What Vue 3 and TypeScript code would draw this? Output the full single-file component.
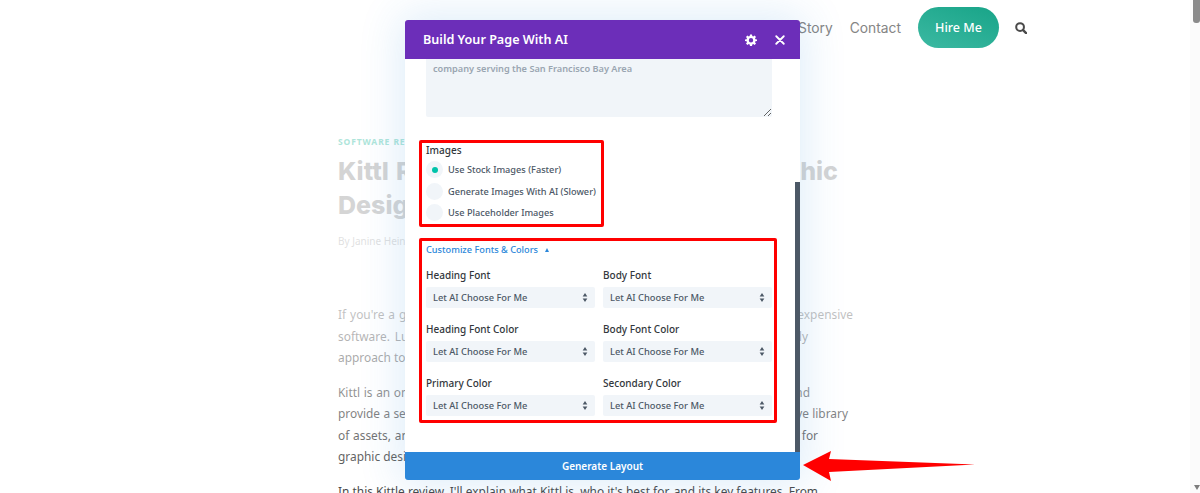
<template>
  <div class="page">
    <header class="site-head">
      <a class="nav-link">Home</a>
      <a class="nav-link">Our Story</a>
      <a class="nav-link">Contact</a>
      <a class="hire">Hire Me</a>
      <svg class="search" viewBox="0 0 13 13" width="12" height="12">
        <circle cx="5.5" cy="5.500" r="4.200" fill="none" stroke="#4a4a4a" stroke-width="2.200" />
        <path d="M8.800 8.800 L12 12" stroke="#4a4a4a" stroke-width="2.600" stroke-linecap="round" />
      </svg>
    </header>

    <article class="post">
      <div class="post-fade"></div>
      <p class="cat">SOFTWARE REVIEWS</p>
      <h1 v-for="line in titleLines" :key="line.text" class="title" :style="{ width: line.width + 'px' }">{{ line.text }}</h1>
      <p class="byline">By Janine Heinrichs</p>
      <div v-for="(para, i) in paragraphs" :key="i" class="para">
        <span v-for="line in para" :key="line.text" class="line" :style="{ width: line.width + 'px' }">{{ line.text }}</span>
      </div>
    </article>

    <div class="scroll-track">
      <div class="scroll-thumb"></div>
      <div class="scroll-down"></div>
    </div>

    <section class="modal">
      <div class="modal-head">
        <span class="modal-title">Build Your Page With AI</span>
        <svg class="gear" viewBox="0 0 24 24" width="12" height="12">
          <path fill="#fff" fill-rule="evenodd" d="M10 1h4l.6 3.2 1.9.8L19.2 3 22 5.800l-2 2.700.8 1.900L24 11v3l-3.200.6-.8 1.900 2 2.700L19.200 22l-2.700-2-1.900.8L14 24h-4l-.6-3.200-1.900-.8-2.700 2L2 19.200l2-2.700-.8-1.900L0 14v-3l3.200-.6.8-1.900-2-2.700L4.800 3l2.700 2 1.900-.8zM12 8a4.400 4.400 0 1 0 0 8.800A4.400 4.400 0 0 0 12 8z" />
        </svg>
        <svg class="close" viewBox="0 0 12 12" width="10" height="10">
          <path d="M1.500 1.500 L10.500 10.500 M10.500 1.500 L1.500 10.500" stroke="#fff" stroke-width="2.200" stroke-linecap="round" />
        </svg>
      </div>

      <div class="modal-body">
        <textarea class="brief" placeholder="Example: a residential plumbing repair and installation family owned&#10;company serving the San Francisco Bay Area"></textarea>

        <div class="red-box images-box">
          <div class="field-label">Images</div>
          <label v-for="(opt, i) in imageOptions" :key="opt" class="radio-row">
            <span class="radio"><span v-if="i === 0" class="radio-dot"></span></span>
            {{ opt }}
          </label>
        </div>

        <div class="red-box fonts-box">
          <div class="customize">Customize Fonts &amp; Colors <span class="tri"></span></div>
          <div class="select-grid">
            <div v-for="name in selectFields" :key="name" class="select-field">
              <div class="field-label">{{ name }}</div>
              <div class="select-wrap">
                <select class="select">
                  <option>Let AI Choose For Me</option>
                </select>
                <svg class="updown" viewBox="0 0 6 10" width="6" height="9">
                  <path d="M3 0 L5.600 3.800 H0.400 Z M3 10 L5.600 6.200 H0.400 Z" fill="#4c5866" />
                </svg>
              </div>
            </div>
          </div>
        </div>
      </div>

      <div class="modal-scroll"></div>
      <button class="generate">Generate Layout</button>
    </section>

    <svg class="red-arrow" viewBox="0 0 180 32" width="180" height="32">
      <path d="M2 15 L30 1 L28 9 L174 14.500 L28 22 L30 31 Z" fill="#f00" />
    </svg>
  </div>
</template>

<script setup lang="ts">
interface Line {
  text: string
  width: number
}

const titleLines: Line[] = [
  { text: 'Kittl Review: The Best AI-Based Graphic', width: 500 },
  { text: 'Design Tool?', width: 180 },
]

// line widths are set so the line ends land where they do in the article column
const paragraphs: Line[][] = [
  [
    { text: "If you're a graphic designer or business owner, you know how hard it is to avoid expensive", width: 515 },
    { text: 'software. Luckily, new online tools are changing that by taking a simpler, friendly', width: 470 },
    { text: 'approach to graphic design for everyone.', width: 200 },
  ],
  [
    { text: 'Kittl is an online graphic design platform that helps you create stunning visuals and', width: 472 },
    { text: 'provide a seamless design experience with AI tools, fun templates, and an extensive library', width: 510 },
    { text: 'of assets, and it is a great all-in-one solution, whether new or a true professional, for', width: 480 },
    { text: 'graphic design projects of any kind.', width: 180 },
  ],
  [
    { text: "In this Kittle review, I'll explain what Kittl is, who it's best for, and its key features. From", width: 480 },
  ],
]

const imageOptions = ['Use Stock Images (Faster)', 'Generate Images With AI (Slower)', 'Use Placeholder Images']

const selectFields = ['Heading Font', 'Body Font', 'Heading Font Color', 'Body Font Color', 'Primary Color', 'Secondary Color']
</script>

<style>
html, body {
  margin: 0;
  height: 493px;
  overflow: hidden;
  background: #fff;
}
</style>

<style scoped>
.page {
  position: relative;
  width: 1200px;
  height: 493px;
  overflow: hidden;
  font-family: "Noto Sans", "Open Sans", sans-serif;
}

.site-head {
  display: flex;
  justify-content: flex-end;
  align-items: center;
  height: 55px;
  padding-right: 173px;
  box-sizing: border-box;
}
.nav-link {
  font-family: Inter, sans-serif;
  font-size: 13.800px;
  color: #858585;
  margin-right: 17px;
}
.hire {
  width: 81px;
  height: 41px;
  line-height: 41px;
  text-align: center;
  border-radius: 21px;
  background: linear-gradient(200deg, #18a488, #3cb9a2);
  color: #fff;
  font-size: 12.500px;
  font-weight: 500;
}
.search {
  margin-left: 16px;
}

.post {
  position: relative;
  padding: 81px 0 0 338px;
}
.post-fade {
  position: absolute;
  left: 0;
  right: 0;
  top: 0;
  height: 438px;
  background: linear-gradient(to bottom, rgba(255, 255, 255, 0.78) 0%, rgba(255, 255, 255, 0.8) 50%, rgba(255, 255, 255, 0.55) 72%, rgba(255, 255, 255, 0.1) 100%);
  z-index: 1;
}
.cat {
  position: relative;
  z-index: 2;
  margin: 0 0 6px;
  font-size: 8.500px;
  line-height: 12px;
  font-weight: 700;
  letter-spacing: 0.900px;
  color: #aee5da;
}
.title {
  margin: 0;
  font-family: Inter, sans-serif;
  font-size: 25px;
  line-height: 34px;
  font-weight: 800;
  color: #333;
  white-space: nowrap;
  text-align: justify;
  text-align-last: justify;
}
.byline {
  margin: 12px 0 56px;
  font-size: 10px;
  line-height: 14px;
  color: #666;
}
.para {
  margin-bottom: 13px;
}
.line {
  display: block;
  font-size: 11.900px;
  line-height: 21.500px;
  color: #333;
  white-space: nowrap;
  text-align: justify;
  text-align-last: justify;
}

.scroll-track {
  position: absolute;
  right: 0;
  top: 0;
  bottom: 0;
  width: 10px;
  background: #fbfbfb;
  z-index: 2;
}
.scroll-thumb {
  position: absolute;
  right: 0;
  top: 0;
  width: 7px;
  height: 23px;
  border-radius: 0 0 3px 3px;
  background: #8b8b8b;
}
.scroll-down {
  position: absolute;
  right: 0;
  top: 485px;
  width: 0;
  height: 0;
  border-left: 3.500px solid transparent;
  border-right: 3.500px solid transparent;
  border-top: 5px solid #7d7d7d;
}

.modal {
  position: absolute;
  left: 405px;
  top: 20px;
  width: 395px;
  height: 460px;
  display: flex;
  flex-direction: column;
  background: #fff;
  border-radius: 3px;
  overflow: hidden;
  z-index: 3;
}
.page::after {
  content: "";
  position: absolute;
  left: 405px;
  top: 20px;
  width: 395px;
  height: 460px;
  box-shadow: 0 0 40px 4px rgba(43, 135, 218, 0.16);
  z-index: 2;
}
.modal-head {
  flex: none;
  display: flex;
  align-items: center;
  height: 39px;
  padding: 0 15px 0 18px;
  background: #6c2eb9;
  color: #fff;
  position: relative;
  z-index: 1;
}
.modal-title {
  flex: 1;
  font-size: 12.600px;
  font-weight: 600;
}
.gear {
  margin-right: 18px;
}
.modal-body {
  flex: 1;
  min-height: 0;
  padding-left: 14px;
  overflow: hidden;
}
.brief {
  display: block;
  box-sizing: border-box;
  width: 346px;
  height: 75px;
  margin: -17px 0 23px 7px;
  padding: 4px 7px 0;
  border: 0;
  border-radius: 2px;
  outline: 0;
  resize: vertical;
  background: #f1f5f9;
  font-family: inherit;
  font-size: 9.200px;
  font-weight: 600;
  line-height: 15px;
}
.brief::placeholder {
  color: #9aa5b1;
}
.red-box {
  box-sizing: border-box;
  border: 3px solid #f00;
  border-radius: 2px;
  padding: 0 4px;
}
.images-box {
  width: 185px;
  height: 87px;
  margin-bottom: 11px;
}
.fonts-box {
  width: 358px;
  height: 185px;
}
.field-label {
  font-size: 10px;
  line-height: 14px;
  font-weight: 500;
  color: #32373c;
}
.images-box .field-label {
  margin-bottom: 2px;
}
.radio-row {
  display: flex;
  align-items: center;
  gap: 5px;
  height: 21.500px;
  font-size: 9.200px;
  font-weight: 500;
  color: #4c5866;
  white-space: nowrap;
}
.radio {
  flex: none;
  display: flex;
  align-items: center;
  justify-content: center;
  width: 17px;
  height: 17px;
  border-radius: 50%;
  background: #f1f5f9;
}
.radio-dot {
  width: 6px;
  height: 6px;
  border-radius: 50%;
  background: #00c3aa;
}
.customize {
  margin-top: 1px;
  font-size: 9.200px;
  line-height: 15px;
  font-weight: 500;
  color: #2b87da;
}
.tri {
  display: inline-block;
  margin-left: 5px;
  vertical-align: 1px;
  border-left: 2.500px solid transparent;
  border-right: 2.500px solid transparent;
  border-bottom: 4px solid #2b87da;
}
.select-grid {
  display: grid;
  grid-template-columns: 169px 169px;
  column-gap: 8px;
  row-gap: 13.800px;
  margin-top: 11px;
}
.select-wrap {
  position: relative;
  margin-top: 5px;
}
.select {
  display: block;
  width: 100%;
  height: 21px;
  padding: 0 7px;
  border: 0;
  border-radius: 2px;
  outline: 0;
  appearance: none;
  background: #f1f5f9;
  font-family: inherit;
  font-size: 9.300px;
  font-weight: 500;
  color: #4c5866;
}
.updown {
  position: absolute;
  right: 7px;
  top: 6px;
}
.modal-scroll {
  position: absolute;
  right: 0;
  top: 162px;
  bottom: 28px;
  width: 5px;
  background: #4c5866;
}
.generate {
  flex: none;
  height: 28px;
  border: 0;
  padding: 0;
  background: #2b87da;
  color: #fff;
  font-family: inherit;
  font-size: 10px;
  font-weight: 600;
}
.red-arrow {
  position: absolute;
  left: 801px;
  top: 450px;
  z-index: 4;
}
</style>
